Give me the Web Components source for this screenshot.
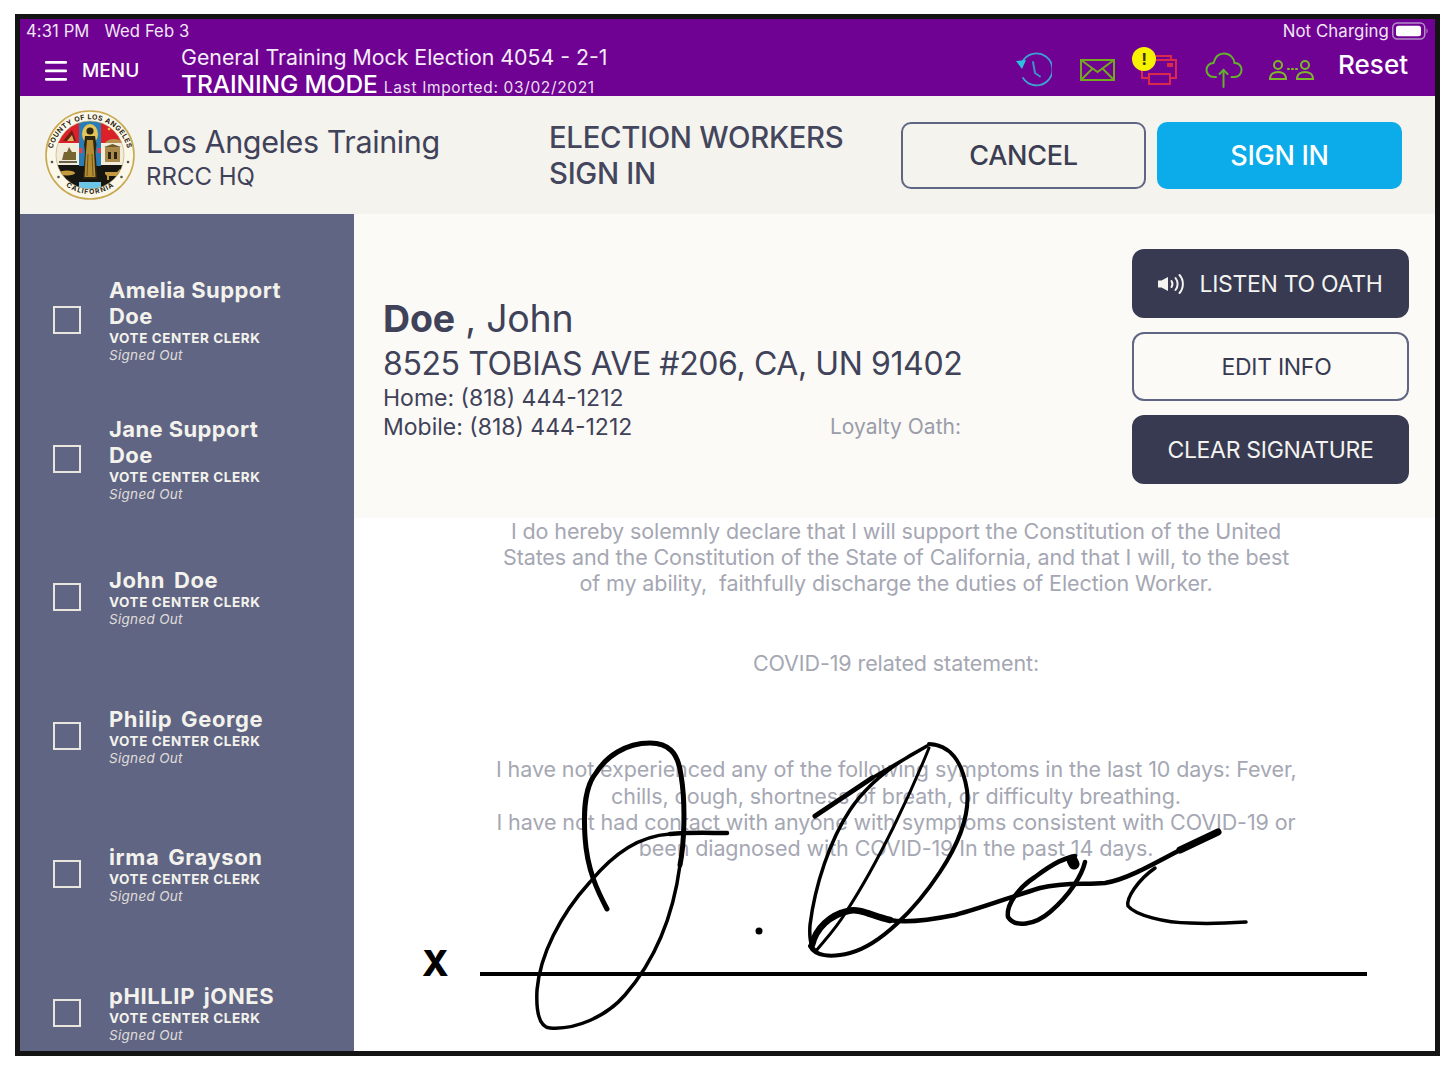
<!DOCTYPE html>
<html><head><meta charset="utf-8"><title>Election Workers Sign In</title>
<style>
html,body{margin:0;background:#fff}
body{font-family:Inter,"Noto Sans",sans-serif;padding:14px 0 0 15px;height:1058px;box-sizing:border-box;overflow:hidden}
</style></head><body>
<x-app>
  <x-top-bar slot="top"></x-top-bar>
  <x-site-bar slot="top"></x-site-bar>
  <x-worker-list slot="side">
    <x-worker name="Amelia Support Doe"></x-worker>
    <x-worker name="Jane Support Doe"></x-worker>
    <x-worker name="John Doe" spaced></x-worker>
    <x-worker name="Philip George" spaced></x-worker>
    <x-worker name="irma Grayson" spaced></x-worker>
    <x-worker name="pHILLIP jONES" spaced></x-worker>
  </x-worker-list>
  <x-detail slot="main"></x-detail>
</x-app>
<script>
function def(name,html){
  customElements.define(name,class extends HTMLElement{
    constructor(){super();this.attachShadow({mode:'open'}).innerHTML=typeof html==='function'?html(this):html;}
  });
}
def('x-app',`<style>
:host{display:flex;flex-direction:column;width:1425px;height:1042px;box-sizing:border-box;border:5px solid #141414;background:#fff;overflow:hidden}
.body{flex:1;display:flex;min-height:0}
</style><slot name="top"></slot><div class="body"><slot name="side"></slot><slot name="main"></slot></div>`);

def('x-icon-history',`<style>:host{display:block;width:38px;height:36px}</style>
<svg width="38" height="36" viewBox="0 0 38 36" fill="none"><path d="M8 10.500A16 16 0 1 1 9 26" stroke="#3f9fd3" stroke-width="1.800" stroke-linecap="round"/><path d="M2 9l10-1-4 9z" fill="#2fc0e0"/><path d="M19 10l2 11 5 3.500" stroke="#3f8fc8" stroke-width="2" stroke-linecap="round"/></svg>`);
def('x-icon-mail',`<style>:host{display:block;width:36px;height:22px}</style>
<svg width="36" height="22" viewBox="0 0 36 22" fill="none" stroke="#74a81f" stroke-width="2"><rect x="1" y="1" width="33" height="20"/><path d="M1 1l16.500 12L34 1M1 21l11-11M34 21L23 10"/></svg>`);
def('x-icon-print',`<style>:host{display:block;position:relative;width:36px;height:32px}
b{position:absolute;left:-9px;top:-7px;width:24px;height:24px;border-radius:50%;background:#f7f200;color:#3a3410;font:700 16px/24px Inter,sans-serif;text-align:center}</style>
<svg width="36" height="32" viewBox="0 0 36 32" fill="none" stroke="#d92a4c" stroke-width="2"><path d="M12 6V2h18v4"/><path d="M7 24H1V6h34v18h-6"/><rect x="8" y="20" width="21" height="10" fill="#6f0293"/><rect x="26" y="9" width="6" height="4" fill="#d92a4c" stroke="none"/></svg><b>!</b>`);
def('x-icon-cloud',`<style>:host{display:block;width:38px;height:36px}</style>
<svg width="38" height="36" viewBox="0 0 38 36" fill="none" stroke="#62b32a" stroke-width="2" stroke-linecap="round"><path d="M11 25H9C4 25 1.500 21.500 1.500 18c0-4 3-7 7-7C10 5 14 1.500 19 1.500c6 0 10 4.500 10.500 9.500 4-.5 7 3 7 7 0 4-3 7-7 7h-3"/><path d="M18.500 35V18"/><path d="M14.500 22l4-4 4 4"/></svg>`);
def('x-icon-people',`<style>:host{display:block;width:46px;height:22px}</style>
<svg width="46" height="22" viewBox="0 0 46 22" fill="none" stroke="#7cb82a" stroke-width="2"><circle cx="9" cy="6" r="4"/><path d="M1 20c0-5 4-7 8-7s8 2 8 7z"/><circle cx="36" cy="6" r="4"/><path d="M28 20c0-5 4-7 8-7s8 2 8 7z"/><path d="M19 10h1M23 10h1M27 10h1" stroke-linecap="round" stroke-width="2.200"/></svg>`);

def('x-top-bar',`<style>
:host{display:block;height:77px;background:#6f0293;color:#fff;box-sizing:border-box}
.status{display:flex;justify-content:space-between;height:24px;padding:0 6px 0 6px;font-size:16.600px;line-height:24px;letter-spacing:.1px;color:#f1e6f5}
.status span+span{margin-left:15px}
.right{display:flex;align-items:center;font-size:16.800px;letter-spacing:.1px}
.bat{margin-left:3px}
.row{display:flex;height:53px}
.menu{display:flex;align-items:center;width:161px;padding:2px 0 0 25px;box-sizing:border-box;font-size:19px;font-weight:500}
.menu svg{margin-right:15px}
.t1{font-size:21.300px;line-height:30px;margin-top:-1px;color:#f5ecf8}
.t2{font-size:24.500px;font-weight:500;line-height:24px;letter-spacing:-.1px;white-space:nowrap}
.t2 small{font-size:15.500px;font-weight:400;letter-spacing:.65px;margin-left:6px;color:#eadff0}
.icons{margin-left:auto;display:flex;align-items:center;padding:0 27px 0 0;height:53px}
.reset{font-size:26px;font-weight:500;margin-left:23px;margin-top:-10px}
</style>
<div class="status"><div><span>4:31 PM</span><span>Wed Feb 3</span></div>
<div class="right">Not Charging<svg class="bat" width="37" height="18" viewBox="0 0 37 18"><rect x=".75" y="1" width="32" height="16" rx="4.500" fill="none" stroke="#b58cc8" stroke-width="1.500"/><rect x="4" y="3.800" width="25" height="10.500" rx="2.500" fill="#fff"/><path d="M34.500 6.500c1.500.5 1.500 4.500 0 5z" fill="#b58cc8"/></svg></div></div>
<div class="row"><div class="menu"><svg width="22" height="20" viewBox="0 0 22 20" fill="#fff"><rect width="22" height="2.800" rx="1" y="0"/><rect width="22" height="2.800" rx="1" y="8.500"/><rect width="22" height="2.800" rx="1" y="17"/></svg>MENU</div>
<div><div class="t1">General Training Mock Election 4054 - 2-1</div><div class="t2">TRAINING MODE<small>Last Imported: 03/02/2021</small></div></div>
<div class="icons"><x-icon-history style="margin-right:28px"></x-icon-history><x-icon-mail style="margin-right:25px"></x-icon-mail><x-icon-print style="margin-right:28px"></x-icon-print><x-icon-cloud style="margin-right:26px"></x-icon-cloud><x-icon-people></x-icon-people><div class="reset">Reset</div></div></div>`);

def('x-seal',`<style>:host{display:block;width:90px;height:90px;flex:none}</style>
<svg width="90" height="90" viewBox="0 0 90 90">
<defs><clipPath id="c"><circle cx="45" cy="45" r="34"/></clipPath>
<path id="top" d="M7 54A38.500 38.500 0 1 1 83 54"/><path id="bot" d="M14 58A34 34 0 0 0 76 58"/></defs>
<circle cx="45" cy="45" r="44" fill="#fbf8ea" stroke="#c8a850" stroke-width="1.600"/>
<g clip-path="url(#c)">
<rect x="10" y="10" width="70" height="70" fill="#f2ecdc"/>
<rect x="10" y="10" width="24" height="23" fill="#dc2029"/><rect x="56" y="10" width="24" height="23" fill="#dc2029"/>
<rect x="10" y="55" width="24" height="25" fill="#17150f"/><rect x="56" y="55" width="24" height="25" fill="#17150f"/>
<rect x="34" y="10" width="22" height="46" fill="#2a7cb4"/>
<rect x="34" y="56" width="22" height="16" fill="#17150f"/>
<rect x="34" y="72" width="22" height="8" fill="#6cc6e8"/>
<rect x="34" y="38" width="3.500" height="5" fill="#d8434e"/><rect x="52.500" y="38" width="3.500" height="5" fill="#d8434e"/>
<ellipse cx="45" cy="24" rx="8" ry="10" fill="#e6c45c"/>
<circle cx="45" cy="21" r="3.600" fill="#2b2412"/>
<path d="M40 26h10l1.500 9-1 7 2 27H38l2-27-1-7z" fill="#2b2412"/>
<path d="M42 30h6l1 12 1.500 25h-11L41 42z" fill="#b48d32"/><path d="M43 44l-1 22M47 44l1 22" stroke="#5a4616" stroke-width=".8"/>
<path d="M18 31l9-11 4 11z" fill="#6b1e14"/><path d="M22 31l5-6 2 6z" fill="#d8b25a"/>
<path d="M60 33a10 7 0 0 1 18 0z" fill="#b9904e"/><circle cx="64" cy="19" r="1.300" fill="#f1c84e"/><circle cx="70" cy="16" r="1.300" fill="#f1c84e"/>
<path d="M17 50l2-8h3l2-5 3 5h4v8z" fill="#77652f"/><path d="M14 52h18" stroke="#3d3416" stroke-width="1.500"/>
<rect x="60" y="37" width="15" height="15" fill="#a98a4c"/><path d="M59 37l8.500-3 8.500 3z" fill="#6e5a2a"/><rect x="63" y="42" width="3" height="7" fill="#2b2412"/><rect x="69" y="42" width="3" height="7" fill="#2b2412"/>
<ellipse cx="22" cy="63" rx="8" ry="2.500" fill="#c49a3e"/><path d="M60 62h12l3-3v6l-2 1v4h-2v-4h-7v4h-2v-4l-2-2z" fill="#c49a3e"/>
</g>
<circle cx="45" cy="45" r="34" fill="none" stroke="#b9a56a" stroke-width=".6"/>
<text font-family="Inter,sans-serif" font-size="7" font-weight="700" fill="#2a2512" letter-spacing=".5"><textPath href="#top" startOffset="50%" text-anchor="middle">COUNTY OF LOS ANGELES</textPath></text>
<text font-family="Inter,sans-serif" font-size="6.800" font-weight="700" fill="#2a2512" letter-spacing=".3" dominant-baseline="hanging"><textPath href="#bot" startOffset="50%" text-anchor="middle">CALIFORNIA</textPath></text>
<g fill="#55524a"><circle cx="7" cy="52" r="1.300"/><circle cx="83" cy="52" r="1.300"/><circle cx="13.500" cy="67" r="1.300"/><circle cx="76.500" cy="67" r="1.300"/></g>
</svg>`);

def('x-site-bar',`<style>
:host{display:flex;height:118px;background:#f5f3ee;color:#3f4259;align-items:flex-start}
x-seal{margin:14px 11px 0 25px}
.org{width:403px;padding-top:25px;box-sizing:border-box}
.o1{font-size:30.500px;line-height:42px;letter-spacing:-.4px}
.o2{font-size:24px;line-height:30px;margin-top:-1px}
.h{width:352px;padding-top:24px;font-size:29.300px;line-height:36px;font-weight:500;letter-spacing:-.3px;color:#43465c}
button{font:500 27px Inter,sans-serif;width:245px;height:67px;margin-top:26px;border-radius:10px;box-sizing:border-box;letter-spacing:-.3px}
.c{background:#f5f3ee;border:2px solid #5f6583;color:#3b3e52;margin-right:11px}
.s{background:#0bace9;border:0;color:#fff}
</style><x-seal></x-seal><div class="org"><div class="o1">Los Angeles Training</div><div class="o2">RRCC HQ</div></div>
<div class="h">ELECTION WORKERS<br>SIGN IN</div><button class="c">CANCEL</button><button class="s">SIGN IN</button>`);

def('x-worker-list',`<style>:host{display:block;flex:none;width:334px;height:100%;background:#5f6583;padding-top:37px;box-sizing:border-box;overflow:hidden}</style><slot></slot>`);
def('x-worker',h=>`<style>
:host{display:flex;align-items:center;height:138.500px;color:#f4f2ec}
.b{width:28px;height:28px;box-sizing:border-box;border:2px solid #e9e6df;margin:0 28px 0 33px;flex:none}
.t{width:190px}
.n{font-size:22px;font-weight:700;line-height:26px;letter-spacing:${h.hasAttribute('spaced')?'.6px':'.4px'};word-spacing:${h.hasAttribute('spaced')?'3px':'0'}}
.r{font-size:13.500px;font-weight:700;line-height:18px;letter-spacing:.55px}
.s{font-size:13.500px;font-style:italic;line-height:16px;letter-spacing:.3px;color:#e0deda}
</style><div class="b"></div><div class="t"><div class="n">${h.getAttribute('name')}</div><div class="r">VOTE CENTER CLERK</div><div class="s">Signed Out</div></div>`);

def('x-action',`<style>
:host{display:flex;align-items:center;justify-content:center;box-sizing:border-box;width:277px;height:69px;border-radius:12px;font-size:23px;letter-spacing:-.3px;background:#373a51;color:#f4f3ef}
:host([light]){background:#fbfaf7;color:#373a51;border:2px solid #5f6583;padding-left:12px}
</style><slot></slot>`);

def('x-speaker',`<style>:host{display:block;width:27px;height:22px;margin-right:14px}</style>
<svg width="27" height="22" viewBox="0 0 27 22" fill="none" stroke="#f4f3ef"><path d="M0 7.500h3.500L10 4v14l-6.500-3.500H0z" fill="#f4f3ef" stroke="none"/><path d="M13.500 8c1.300 2 1.300 4 0 6M17.500 5c2.800 3.500 2.800 8.500 0 12M21.500 2c4.500 5 4.500 13 0 18" stroke-width="2" stroke-linecap="round"/></svg>`);

def('x-detail',`<style>
:host{display:block;flex:1;min-width:0;position:relative;height:100%;background:#fff;overflow:hidden}
.top{height:304px;background:#fbfaf7;display:flex;box-sizing:border-box;color:#3f4259}
.who{width:578px;margin-left:29px;padding-top:80px;flex:none}
.name{font-size:37.500px;line-height:50px;letter-spacing:-.2px}
.name b{font-weight:700}
.addr{font-size:32px;line-height:40px;letter-spacing:-.4px;white-space:nowrap}
.ph{font-size:23px;line-height:28.500px;white-space:nowrap}
.ph2{display:flex;justify-content:space-between}
.ph2 span{font-size:21px;color:#9a9ca8}
.acts{margin-left:171px;padding-top:35px;display:flex;flex-direction:column;gap:14px}
.oath{width:800px;margin:-.5px 0 0 142px;text-align:center;color:#a5a7b3;font-size:21.500px;line-height:26.400px;letter-spacing:-.1px;white-space:nowrap}
.gap1{height:53px}.gap2{height:80px}
svg.sig{position:absolute;left:0;top:0;pointer-events:none}
.x{position:absolute;left:68px;top:727px;font-size:35px;line-height:44px;font-weight:800;color:#000}
</style>
<div class="top"><div class="who"><div class="name"><b>Doe</b> , John</div><div class="addr">8525 TOBIAS AVE #206, CA, UN 91402</div><div class="ph">Home: (818) 444-1212</div><div class="ph ph2">Mobile: (818) 444-1212<span>Loyalty Oath:</span></div></div>
<div class="acts"><x-action><x-speaker></x-speaker>LISTEN TO OATH</x-action><x-action light>EDIT INFO</x-action><x-action>CLEAR SIGNATURE</x-action></div></div>
<div class="oath">I do hereby solemnly declare that I will support the Constitution of the United<br>States and the Constitution of the State of California, and that I will, to the best<br>of my ability,&nbsp; faithfully discharge the duties of Election Worker.
<div class="gap1"></div>COVID-19 related statement:<div class="gap2"></div>I have not experienced any of the following symptoms in the last 10 days: Fever,<br>chills, cough, shortness of breath, or difficulty breathing.<br>I have not had contact with anyone with symptoms consistent with COVID-19 or<br>been diagnosed with COVID-19 In the past 14 days.</div>
<div class="x">X</div>
<svg class="sig" width="1081" height="837" viewBox="354 214 1081 837" fill="none" stroke="#000" stroke-linecap="round" stroke-linejoin="round">
<path stroke-width="4" stroke-linecap="butt" d="M480 974H1367"/>
<path stroke-width="5" d="M607 909C598 892 587 870 585 837C583 805 586 785 596 773C606 757 625 743 650 743C668 743 678 752 681 775C686 805 684 845 680 865"/>
<path stroke-width="3.500" d="M680 865C672 925 651 965 625 995C606 1017 575 1030 550 1028C538 1027 536 1010 537 990C540 955 560 915 590 882C615 852 640 836 670 834"/>
<path stroke-width="4.500" d="M670 834C690 832 710 833 727 833"/>
<path stroke-width="5" d="M815 816L872 778"/>
<path stroke-width="3.500" d="M872 778L927 746C900 760 870 780 850 810C830 840 815 885 810 925C809 940 811 948 816 951"/>
<path stroke-width="3" d="M929 748C912 790 880 860 846 912C835 930 823 942 816 951"/>
<path stroke-width="4" d="M929 744C950 745 962 760 967 790C970 815 958 845 940 872C915 910 880 945 850 953C830 958 815 956 810 946"/>
<path stroke-width="6.500" d="M812 945C816 928 830 915 848 911C860 908 872 916 890 920"/>
<path stroke-width="4.500" d="M890 920C905 923 930 920 955 915C985 907 1010 897 1040 888C1065 882 1085 885 1105 883C1125 880 1150 866 1180 850"/>
<path stroke-width="7" d="M1180 850L1218 832"/>
<path stroke-width="4.500" d="M1085 862C1082 875 1070 895 1050 912C1035 925 1015 928 1008 917C1006 905 1018 888 1035 877C1055 862 1065 858 1075 856"/>
<path stroke-width="11" d="M1072 860L1074 864"/>
<path stroke-width="3.500" d="M1155 868C1138 880 1126 898 1128 906C1135 915 1165 923 1190 923C1210 924 1230 923 1246 922"/>
<circle cx="759" cy="931" r="3.500" fill="#000" stroke="none"/>
</svg>`);
</script>
</body></html>
